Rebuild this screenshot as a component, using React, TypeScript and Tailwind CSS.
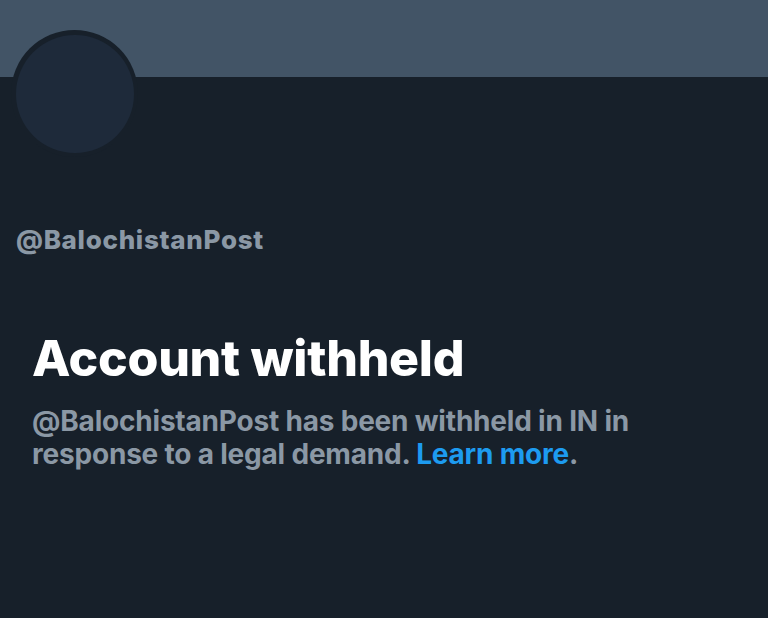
export default function App() {
  return (
    <div className="w-[768px] h-[618px] bg-[#17202a] overflow-hidden" style={{ fontFamily: "Inter, 'Noto Sans', sans-serif" }}>
      <div className="h-[77px] bg-[#425466]" />
      <div className="ml-[11px] -mt-[47px] w-[127px] h-[127px] rounded-full bg-[#17202a] flex items-center justify-center">
        <div className="w-[118px] h-[118px] rounded-full bg-[#1e2a3a]" />
      </div>
      <div className="pl-[16px] mt-[68px] text-[26px] leading-[30px] font-extrabold text-[#8b98a5] tracking-[0.7px]">
        @BalochistanPost
      </div>
      <div className="pl-[32px] mt-[75px]">
        <h1 className="text-[50px] leading-[56px] font-extrabold text-white tracking-[-0.3px]">Account withheld</h1>
        <p className="mt-[19px] text-[28px] leading-[33px] font-bold text-[#8b98a5] w-[680px] tracking-[-0.2px]">
          @BalochistanPost has been withheld in IN in
          <br />
          response to a legal demand. <span className="text-[#1d9bf0]">Learn more</span>.
        </p>
      </div>
    </div>
  );
}
